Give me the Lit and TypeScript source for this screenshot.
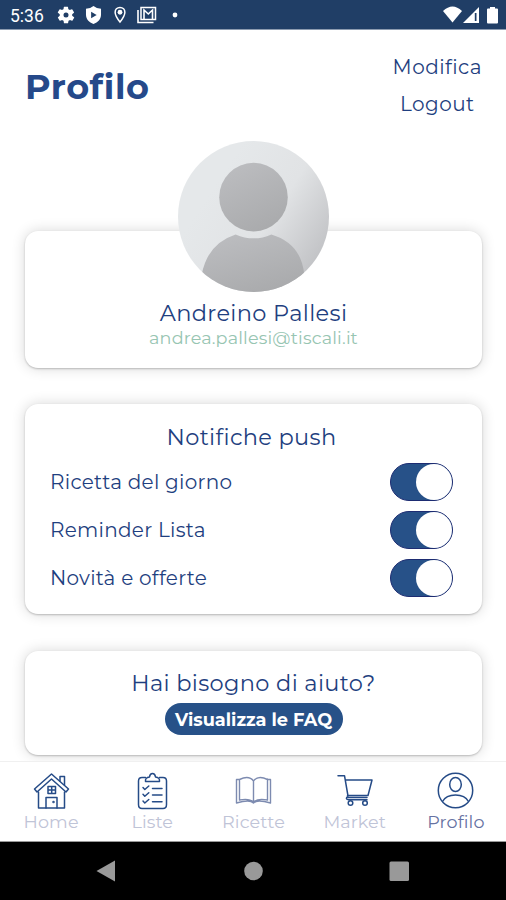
import { LitElement, html, css, svg } from "lit";
import { customElement, property } from "lit/decorators.js";
import { classMap } from "lit/directives/class-map.js";

const tabs = [
  {
    label: "Home",
    icon: svg`<path d="M1.500 17 18.500 2 35.500 17 33 20 18.500 7 4 20Z"/><path d="M27 9V4.500h4.500V13M5.500 20v16h26V20"/><path d="M15 14.500h7.500v7H15zM18.700 14.500v7M15 18h7.500M13 36V25.500h11V36"/><circle cx="20.500" cy="30" r=".5"/>`,
  },
  {
    label: "Liste",
    icon: svg`<path d="M11.500 5.500H8Q4.500 5.500 4.500 9v23.500Q4.500 36.500 8 36.500h21q3.500 0 3.500-4V9Q32.500 5.500 29 5.500h-3.500"/><path d="M11.500 9.500q-.5-4 4-4.500 .5-3.500 3-3.500T21.500 5q4.500.5 4 4.500z"/><path d="m9 15.500 1.800 2 4-3.500M9 22.300l1.800 2 4-3.500M9 29l1.800 2 4-3.500M18.500 16.500h9.500M18.500 23h9.500M18.500 29.800h9.500"/>`,
  },
  {
    label: "Ricette",
    thin: true,
    icon: svg`<path d="M4.500 8v19.500M4.500 7.500H1.500v23.500Q15 27 18.500 31 22 27 35.500 31V7.500h-3M4.500 28Q14 26 18.500 30 23 26 32.500 28V7M4.500 7.500Q14 3 18.500 9 23 3 32.500 7.500M18.500 9v21"/>`,
  },
  {
    label: "Market",
    icon: svg`<path d="M2 3.700h6.500L12 24q-3.500 3 .5 3.800h18.500M9.500 8H36L32 23.500H11.500M12 25.500h19"/><circle cx="14.500" cy="31" r="2.300"/><circle cx="29" cy="31" r="2.300"/>`,
  },
  {
    label: "Profilo",
    active: true,
    icon: svg`<circle cx="18.500" cy="18.500" r="17.200"/><ellipse cx="18.500" cy="12.500" rx="5.800" ry="7"/><path d="M5.500 29.500Q9 23 18.500 23T31.500 29.500"/>`,
  },
];

@customElement("status-bar")
class StatusBar extends LitElement {
  static styles = css`
    :host { display: flex; justify-content: space-between; background: #203e66; color: #fff; border-bottom: 1px solid #8c9bb0; box-sizing: border-box; height: 30px; }
    .group { display: flex; align-items: center; }
    .time { font: 400 17.500px/30px Roboto, sans-serif; margin-left: 10px; width: 46px; padding-top: 2px; }
    svg { display: block; fill: #fff; }
    .left { margin-right: 8px; }
  `;
  render() {
    return html`
      <div class="group">
        <span class="time">5:36</span>
        <svg class="left" width="20" height="20" viewBox="0 0 24 24"><path d="M19.400 13a7.500 7.500 0 0 0 0-2l2.100-1.600a.5.5 0 0 0 .1-.6l-2-3.500a.5.5 0 0 0-.6-.2l-2.500 1a7.300 7.300 0 0 0-1.700-1l-.4-2.600a.5.5 0 0 0-.5-.4h-4a.5.5 0 0 0-.5.4L9 5.100a7.700 7.700 0 0 0-1.700 1l-2.500-1a.5.5 0 0 0-.6.200l-2 3.500a.5.500 0 0 0 .1.600L4.500 11a8 8 0 0 0 0 2l-2.100 1.600a.5.5 0 0 0-.1.600l2 3.500c.1.200.4.300.6.200l2.500-1a7.300 7.300 0 0 0 1.700 1l.4 2.600c0 .300.2.400.5.400h4c.3 0 .5-.200.500-.400L15 18.900a7.700 7.700 0 0 0 1.700-1l2.500 1c.2.100.5 0 .6-.2l2-3.500a.5.5 0 0 0-.1-.6zM12 15a3 3 0 1 1 0-6 3 3 0 0 1 0 6z"/></svg>
        <svg class="left" width="19" height="20" viewBox="0 0 24 25"><path fill-rule="evenodd" d="M12 1Q16 4.500 21.500 4.500V12c0 6-4 10-9.500 12C6.500 22 2.500 18 2.500 12V4.500Q8 4.500 12 1zM9 8.500v8l7-4z"/></svg>
        <svg class="left" width="18" height="19" viewBox="0 0 24 24"><path d="M12 2.500c-4 0-6.500 3-6.500 6.500C5.500 14 12 22 12 22S18.500 14 18.500 9c0-3.500-2.500-6.500-6.500-6.500z" fill="none" stroke="#fff" stroke-width="2"/><circle cx="12" cy="9" r="3.200"/></svg>
        <svg width="20" height="18" viewBox="0 0 20 18"><path d="M1 4v12.500h15.500" fill="none" stroke="#fff" stroke-width="1.600"/><path d="M4 1.500h14.500v12H4z" fill="none" stroke="#fff" stroke-width="1.500"/><path d="M7 13V4l4.300 4L15.500 4v9" fill="none" stroke="#fff" stroke-width="1.600"/></svg>
        <svg width="36" height="20" viewBox="0 0 36 20"><circle cx="18" cy="10" r="2.400"/></svg>
      </div>
      <svg width="64" height="29" viewBox="442 0 64 29">
        <path d="M443 11q9.500-9 19 0l-9.500 11.500z"/>
        <path fill-rule="evenodd" d="M463 23 479 7v16zM474.800 13v8h1.700V13z"/>
        <path d="M488 8.500h2V7h5v1.500h2q1 0 1 1V22.500q0 1-1 1h-9q-1 0-1-1V9.500q0-1 1-1z"/>
      </svg>
    `;
  }
}

@customElement("toggle-row")
class ToggleRow extends LitElement {
  @property() label = "";
  @property({ type: Boolean }) on = false;
  static styles = css`
    :host { display: flex; align-items: center; justify-content: space-between; height: 48px; }
    .label { font-size: 20px; letter-spacing: 0.270px; }
    .track { box-sizing: border-box; display: flex; width: 63px; height: 38px; border-radius: 19px; border: 1px solid #1d2c72; background: #fff; }
    .track.on { background: #275188; justify-content: flex-end; }
    .knob { width: 36px; height: 36px; border-radius: 50%; background: #fff; }
  `;
  render() {
    return html`<span class="label">${this.label}</span>
      <span class=${classMap({ track: true, on: this.on })}><span class="knob"></span></span>`;
  }
}

@customElement("tab-bar")
class TabBar extends LitElement {
  static styles = css`
    :host { display: grid; grid-template-columns: repeat(5, 1fr); height: 81px; box-sizing: border-box; background: #fff; border-top: 1px solid #f0f0f0; border-bottom: 1px solid #999; }
    .tab { display: flex; flex-direction: column; align-items: center; padding: 10px 0 0 1px; color: #bfc4d7; font-size: 17.600px; line-height: 22px; letter-spacing: 0.100px; }
    .active { color: #6672a2; }
    svg { display: block; fill: none; stroke: #254b87; stroke-width: 1.500; stroke-linejoin: round; stroke-linecap: round; }
    .thin { stroke: #7d8bb0; stroke-width: 1.400; }
  `;
  render() {
    return tabs.map(
      (t) => html`<div class=${classMap({ tab: true, active: !!t.active })}>
        <svg class=${classMap({ thin: !!t.thin })} width="37" height="39" viewBox="0 0 37 39">${t.icon}</svg>
        <span>${t.label}</span>
      </div>`
    );
  }
}

@customElement("app-root")
class AppRoot extends LitElement {
  static styles = css`
    :host { display: flex; flex-direction: column; width: 506px; height: 900px; overflow: hidden; background: #fff; color: #1f3f80; font-family: Montserrat, Inter, "Liberation Sans", sans-serif; font-weight: 400; font-variant-ligatures: none; }
    .page { flex: 1; min-height: 0; overflow: hidden; padding: 0 24px 0 25px; }
    .header { display: flex; justify-content: space-between; height: 111px; }
    .title { margin: 36px 0 0; font-size: 35px; line-height: 42px; font-weight: 700; letter-spacing: 0.550px; color: #25498a; }
    .actions { display: flex; flex-direction: column; align-items: center; padding-top: 19px; font-size: 20px; line-height: 37px; letter-spacing: 0.450px; }
    .card { display: flex; flex-direction: column; align-items: center; box-sizing: border-box; background: #fff; border-radius: 13px; box-shadow: 0 1px 2px rgba(0, 0, 0, 0.220), 0 0 14px rgba(0, 0, 0, 0.160); }
    .person { height: 137px; margin-top: 90px; }
    .avatar { display: block; margin-top: -90px; width: 151px; height: 151px; flex: none; }
    .name { font-size: 22.500px; line-height: 28px; margin-top: 7px; letter-spacing: 0.350px; }
    .mail { font-size: 17.600px; line-height: 22px; color: #97c5b2; letter-spacing: 0.150px; }
    .push { height: 210px; margin-top: 36px; padding: 19px 29px 0 25px; align-items: stretch; }
    .heading { font-size: 22.500px; line-height: 28px; letter-spacing: 0.350px; text-align: center; }
    .rows { margin-top: 7px; }
    .help { height: 104px; margin-top: 37px; padding-top: 18px; }
    .faq { margin-top: 6px; width: 178px; height: 32px; border-radius: 16px; background: #275188; color: #fff; font-size: 17.700px; line-height: 33px; font-weight: 700; text-align: center; white-space: nowrap; }
    .system { display: flex; height: 58px; background: #000; }
  `;
  render() {
    return html`
      <status-bar></status-bar>
      <main class="page">
        <header class="header">
          <h1 class="title">Profilo</h1>
          <div class="actions"><span>Modifica</span><span>Logout</span></div>
        </header>
        <section class="card person">
          <svg class="avatar" viewBox="0 0 152 152">
            <defs>
              <linearGradient id="bg" gradientUnits="userSpaceOnUse" x1="40" y1="40" x2="150" y2="112"><stop offset="0" stop-color="#e5e8ea"/><stop offset="0.5" stop-color="#e1e3e5"/><stop offset="1" stop-color="#c0c1c4"/></linearGradient>
              <linearGradient id="fg" x1="0.2" y1="0" x2="0.7" y2="1"><stop offset="0" stop-color="#bcbdc0"/><stop offset="1" stop-color="#a9aaac"/></linearGradient>
              <clipPath id="disc"><circle cx="76" cy="76" r="76"/></clipPath>
            </defs>
            <g clip-path="url(#disc)">
              <rect width="152" height="152" fill="url(#bg)"/>
              <circle cx="76" cy="56.500" r="34.500" fill="url(#fg)"/>
              <path d="M58 94Q76 102 94 94 124 103 127 134V152H24V134Q30 103 58 94Z" fill="url(#fg)"/>
            </g>
          </svg>
          <span class="name">Andreino Pallesi</span>
          <span class="mail">andrea.pallesi@tiscali.it</span>
        </section>
        <section class="card push">
          <span class="heading">Notifiche push</span>
          <div class="rows">
            ${["Ricetta del giorno", "Reminder Lista", "Novità e offerte"].map(
              (l) => html`<toggle-row label=${l} on></toggle-row>`
            )}
          </div>
        </section>
        <section class="card help">
          <span class="heading">Hai bisogno di aiuto?</span>
          <span class="faq">Visualizza le FAQ</span>
        </section>
      </main>
      <tab-bar></tab-bar>
      <nav class="system">
        <svg width="506" height="58" viewBox="0 0 506 58" fill="#999"><path d="M96.500 29 115 18.500V39.500Z"/><circle cx="253.500" cy="29" r="9.300"/><rect x="389.500" y="19.500" width="19.500" height="19.500" rx="1.500"/></svg>
      </nav>
    `;
  }
}
